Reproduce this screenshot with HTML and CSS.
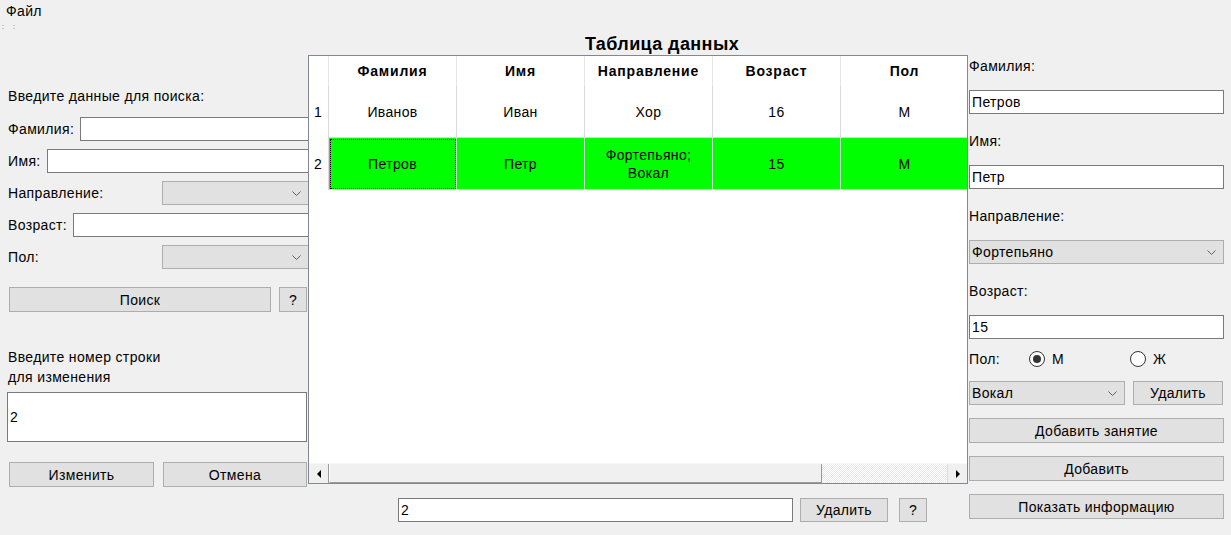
FILE: index.html
```html
<!DOCTYPE html>
<html lang="ru">
<head>
<meta charset="utf-8">
<title>Таблица данных</title>
<link rel="stylesheet" href="styles.css">
</head>
<body>
<div class="window">
  <div class="menubar"><span class="menu-item">Файл</span></div>
  <div class="toolbar"><span class="grip"></span><span class="grip"></span></div>
  <div class="main">
    <section class="left">
      <div class="heading">Введите данные для поиска:</div>
      <div class="form-row first"><span class="label">Фамилия:</span><div class="input under"></div></div>
      <div class="form-row"><span class="label">Имя:</span><div class="input under"></div></div>
      <div class="form-row"><span class="label">Направление:</span><div class="combo narrow"><span class="combo-text"></span><svg class="chev" width="9" height="5" viewBox="0 0 9 5"><polyline points="0.5,0.5 4.5,4.5 8.5,0.5" fill="none" stroke="#606060" stroke-width="1"/></svg></div></div>
      <div class="form-row"><span class="label">Возраст:</span><div class="input under"></div></div>
      <div class="form-row"><span class="label">Пол:</span><div class="combo narrow"><span class="combo-text"></span><svg class="chev" width="9" height="5" viewBox="0 0 9 5"><polyline points="0.5,0.5 4.5,4.5 8.5,0.5" fill="none" stroke="#606060" stroke-width="1"/></svg></div></div>
      <div class="btn-row search-row"><div class="btn btn-search">Поиск</div><div class="btn btn-q">?</div></div>
      <div class="note">Введите номер строки<br>для изменения</div>
      <div class="textbox">2</div>
      <div class="btn-row edit-row"><div class="btn btn-edit">Изменить</div><div class="btn btn-cancel">Отмена</div></div>
    </section>

    <section class="center">
      <div class="title">Таблица данных</div>
      <div class="table-frame">
        <div class="grid-wrap">
          <div class="grid">
            <div class="cell hdr corner"></div>
            <div class="cell hdr">Фамилия</div>
            <div class="cell hdr">Имя</div>
            <div class="cell hdr">Направление</div>
            <div class="cell hdr">Возраст</div>
            <div class="cell hdr">Пол</div>

            <div class="cell rownum">1</div>
            <div class="cell">Иванов</div>
            <div class="cell">Иван</div>
            <div class="cell">Хор</div>
            <div class="cell">16</div>
            <div class="cell">М</div>

            <div class="cell rownum">2</div>
            <div class="cell green focus">Петров</div>
            <div class="cell green">Петр</div>
            <div class="cell green multi">Фортепьяно;<br>Вокал</div>
            <div class="cell green">15</div>
            <div class="cell green">М</div>
          </div>
        </div>
        <div class="hscroll">
          <div class="sb-btn"><span class="tri tri-left"></span></div>
          <div class="sb-thumb"></div>
          <div class="sb-track"></div>
          <div class="sb-btn"><span class="tri tri-right"></span></div>
        </div>
      </div>
      <div class="bottom-row">
        <div class="input del-input">2</div>
        <div class="btn btn-del">Удалить</div>
        <div class="btn btn-q2">?</div>
      </div>
    </section>

    <section class="right">
      <div class="rlabel">Фамилия:</div>
      <div class="input rfield">Петров</div>
      <div class="rlabel">Имя:</div>
      <div class="input rfield">Петр</div>
      <div class="rlabel">Направление:</div>
      <div class="combo rfield"><span class="combo-text">Фортепьяно</span><svg class="chev" width="9" height="5" viewBox="0 0 9 5"><polyline points="0.5,0.5 4.5,4.5 8.5,0.5" fill="none" stroke="#606060" stroke-width="1"/></svg></div>
      <div class="rlabel">Возраст:</div>
      <div class="input rfield">15</div>
      <div class="gender-row">
        <span class="gender-label">Пол:</span>
        <span class="radio-opt opt-m"><span class="radio checked"></span><span>М</span></span>
        <span class="radio-opt"><span class="radio"></span><span>Ж</span></span>
      </div>
      <div class="lesson-row">
        <div class="combo lesson-combo"><span class="combo-text">Вокал</span><svg class="chev" width="9" height="5" viewBox="0 0 9 5"><polyline points="0.5,0.5 4.5,4.5 8.5,0.5" fill="none" stroke="#606060" stroke-width="1"/></svg></div>
        <div class="btn btn-rdel">Удалить</div>
      </div>
      <div class="btn rbtn">Добавить занятие</div>
      <div class="btn rbtn">Добавить</div>
      <div class="btn rbtn">Показать информацию</div>
    </section>
  </div>
</div>
</body>
</html>
```

FILE: styles.css
```css
* { box-sizing: border-box; }

html, body {
  margin: 0;
  padding: 0;
}

body {
  width: 1231px;
  height: 535px;
  overflow: hidden;
  background: #f0f0f0;
  font-family: "Liberation Sans", Arial, sans-serif;
  font-size: 14px;
  letter-spacing: 0.35px;
  color: #000;
}

.window {
  width: 1231px;
  height: 535px;
}

.menubar {
  height: 22px;
  padding: 3px 0 0 6px;
  line-height: 16px;
}

.toolbar {
  height: 12px;
  display: flex;
  gap: 9px;
  padding: 3px 0 0 2px;
}

.grip {
  width: 2px;
  height: 5px;
  background-image: linear-gradient(#c8c8c8 0 1px, transparent 1px 3px, #c8c8c8 3px 4px, transparent 4px);
}

.main {
  display: flex;
  height: 501px;
}

/* ---------- left panel ---------- */
.left {
  width: 308px;
  flex: none;
  padding-left: 8px;
  display: flex;
  flex-direction: column;
}

.heading {
  margin-top: 54px;
  height: 16px;
  line-height: 16px;
}

.form-row {
  display: flex;
  align-items: center;
  height: 24px;
  margin-top: 8px;
}

.form-row.first { margin-top: 13px; }

.label {
  white-space: nowrap;
  margin-right: 6px;
  line-height: 16px;
}

.input {
  height: 24px;
  border: 1px solid #7a7a7a;
  background: #fff;
  padding-left: 2px;
  line-height: 22px;
}

.input.under {
  flex: 1;
  margin-right: -6px;
}

.combo {
  height: 24px;
  border: 1px solid #adadad;
  background: #e1e1e1;
  display: flex;
  align-items: center;
  padding: 0 7px 0 2px;
}

.combo-text { flex: 1; }

.chev { flex: none; }

.combo.narrow {
  width: 147px;
  margin-left: auto;
  margin-right: -1px;
}

.btn {
  height: 25px;
  border: 1px solid #adadad;
  background: #e1e1e1;
  display: flex;
  align-items: center;
  justify-content: center;
  line-height: 16px;
}

.btn-row {
  display: flex;
  margin-left: 1px;
}

.search-row {
  margin-top: 18px;
  gap: 8px;
}

.btn-search { width: 262px; }
.btn-q { width: 28px; }

.note {
  margin-top: 35px;
  line-height: 20px;
}

.textbox {
  margin-top: 5px;
  margin-left: -1px;
  width: 300px;
  height: 50px;
  border: 1px solid #7a7a7a;
  background: #fff;
  padding-left: 2px;
  display: flex;
  align-items: center;
}

.edit-row {
  margin-top: 20px;
  gap: 9px;
}

.btn-edit { width: 145px; }
.btn-cancel { width: 144px; }

/* ---------- center ---------- */
.center {
  width: 660px;
  flex: none;
  display: flex;
  flex-direction: column;
}

.title {
  height: 21px;
  line-height: 21px;
  font-size: 18px;
  font-weight: bold;
  letter-spacing: 0.4px;
  text-align: center;
  padding-left: 48px;
}

.table-frame {
  height: 429px;
  border: 1px solid #828790;
  background: #fff;
  display: flex;
  flex-direction: column;
}

.grid-wrap {
  flex: 1;
  overflow: hidden;
}

.grid {
  width: 660px;
  display: grid;
  grid-template-columns: 20px repeat(5, 128px);
  grid-template-rows: 30px 52px 52px;
}

.cell {
  display: flex;
  align-items: center;
  justify-content: center;
  text-align: center;
  border-right: 1px solid #d9d9d9;
  border-bottom: 1px solid #d9d9d9;
  line-height: 18px;
}

.cell.hdr {
  font-weight: bold;
  letter-spacing: 0.8px;
  border-bottom: none;
  border-right-color: #e6e6e6;
}

.cell.rownum {
  justify-content: flex-start;
  padding-left: 5px;
  border-bottom: none;
}

.cell.green { background: #00ff00; }

.cell.focus {
  outline: 1px dotted #000;
  outline-offset: -2px;
}

.hscroll {
  height: 20px;
  flex: none;
  display: flex;
  background: #f0f0f0;
  border-top: 1px solid #f7f7f7;
}

.sb-btn {
  width: 20px;
  flex: none;
  display: flex;
  align-items: center;
  justify-content: center;
  border-right: 1px solid #9a9a9a;
  background: #f0f0f0;
}

.sb-btn:last-child {
  border-right: none;
  border-left: 1px solid #dcdcdc;
}

.tri {
  width: 0;
  height: 0;
  border-top: 4px solid transparent;
  border-bottom: 4px solid transparent;
}

.tri-left { border-right: 4px solid #000; }
.tri-right { border-left: 4px solid #000; }

.sb-thumb {
  width: 493px;
  flex: none;
  background: #f0f0f0;
  border-left: 1px solid #fff;
  border-right: 1px solid #9a9a9a;
  border-bottom: 1px solid #9a9a9a;
}

.sb-track {
  flex: 1;
  background-color: #fff;
  background-image: repeating-conic-gradient(#e8e8e8 0 25%, #fff 0 50%);
  background-size: 2px 2px;
}

.bottom-row {
  margin-top: 14px;
  padding-left: 90px;
  display: flex;
  height: 24px;
}

.del-input {
  width: 395px;
  height: 24px;
}

.btn-del {
  width: 88px;
  height: 24px;
  margin-left: 7px;
}

.btn-q2 {
  width: 28px;
  height: 24px;
  margin-left: 11px;
}

/* ---------- right panel ---------- */
.right {
  flex: 1;
  padding: 24px 7px 0 1px;
  display: flex;
  flex-direction: column;
}

.rlabel {
  height: 16px;
  line-height: 16px;
  margin-bottom: 16px;
}

.rfield {
  height: 24px;
  margin-bottom: 19px;
}

.input.rfield {
  line-height: 22px;
}

.gender-row {
  margin-top: -9px;
  height: 20px;
  display: flex;
  align-items: center;
}

.gender-label { width: 60px; }

.radio-opt {
  display: flex;
  align-items: center;
  gap: 7px;
}

.opt-m { width: 101px; }

.radio {
  width: 16px;
  height: 16px;
  border-radius: 50%;
  border: 1px solid #333;
  background: #fff;
  display: flex;
  align-items: center;
  justify-content: center;
}

.radio.checked::after {
  content: "";
  width: 8px;
  height: 8px;
  border-radius: 50%;
  background: #333;
}

.lesson-row {
  margin-top: 12px;
  display: flex;
  gap: 8px;
}

.lesson-combo { width: 156px; }

.btn-rdel {
  width: 90px;
  height: 24px;
}

.rbtn {
  width: 255px;
  margin-top: 13px;
}
```
